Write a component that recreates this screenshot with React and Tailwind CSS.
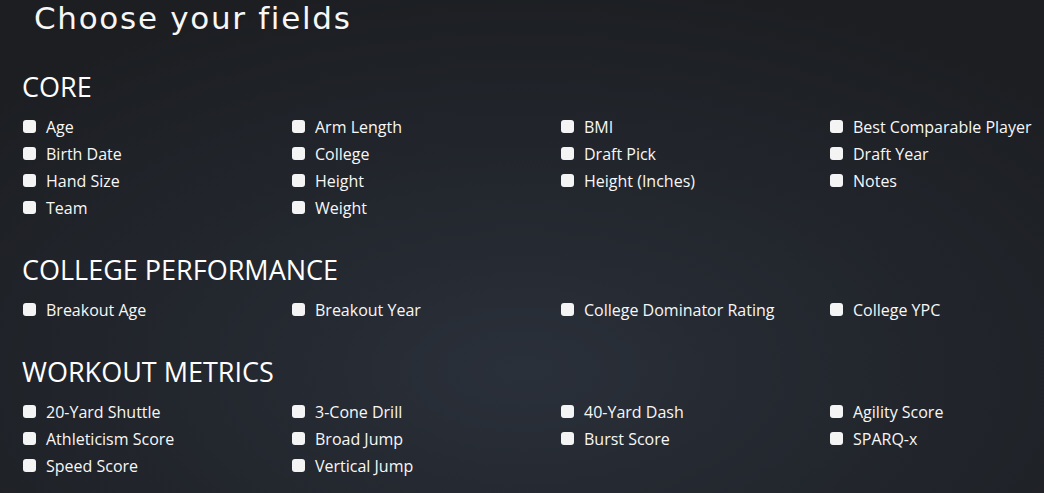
const SECTIONS = [
  {
    title: 'CORE',
    fields: [
      'Age', 'Arm Length', 'BMI', 'Best Comparable Player',
      'Birth Date', 'College', 'Draft Pick', 'Draft Year',
      'Hand Size', 'Height', 'Height (Inches)', 'Notes',
      'Team', 'Weight',
    ],
  },
  {
    title: 'COLLEGE PERFORMANCE',
    fields: ['Breakout Age', 'Breakout Year', 'College Dominator Rating', 'College YPC'],
  },
  {
    title: 'WORKOUT METRICS',
    fields: [
      '20-Yard Shuttle', '3-Cone Drill', '40-Yard Dash', 'Agility Score',
      'Athleticism Score', 'Broad Jump', 'Burst Score', 'SPARQ-x',
      'Speed Score', 'Vertical Jump',
    ],
  },
];

function Field({ label }) {
  return (
    <label className="flex items-center h-[27px] gap-[10px] pl-px cursor-pointer">
      <span className="w-[13px] h-[13px] rounded-[3px] bg-[#f4f4f4] shrink-0" />
      <span className="text-[16px] font-medium text-[#f7f7f7] whitespace-nowrap">{label}</span>
    </label>
  );
}

export default function App() {
  return (
    <div
      className="w-[1044px] h-[493px] overflow-hidden text-white bg-[radial-gradient(ellipse_70%_80%_at_50%_75%,#2a303a_0%,#23272e_45%,#1c1e22_100%)]"
      style={{ fontFamily: '"Open Sans", sans-serif' }}
    >
      <h1
        className="pl-[34px] h-[36px] leading-[36px] text-[31px] tracking-[1.7px] text-[#f7f7f7]"
        style={{ fontFamily: '"DejaVu Sans", sans-serif' }}
      >
        Choose your fields
      </h1>
      <div className="pl-[22px] pt-[33px] flex flex-col gap-[31px]">
        {SECTIONS.map((s) => (
          <section key={s.title}>
            <h2 className="h-[36px] leading-[36px] text-[27px] font-medium text-white mb-2">{s.title}</h2>
            <div className="grid grid-cols-[repeat(4,269px)]">
              {s.fields.map((f) => (
                <Field key={f} label={f} />
              ))}
            </div>
          </section>
        ))}
      </div>
    </div>
  );
}
